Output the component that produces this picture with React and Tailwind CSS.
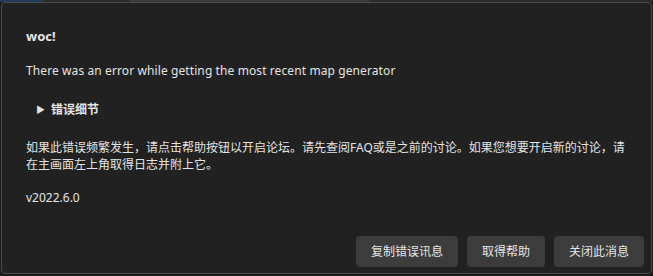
import React from 'react';

const font = { fontFamily: '"Noto Sans", "Noto Sans CJK SC", sans-serif' };

const Button = ({ children }) => (
  <button className="h-[31px] rounded-[4px] bg-[#3c3c3c] px-[15px] text-[12px] text-[#e6e6e6]">
    {children}
  </button>
);

export default function App() {
  return (
    <div className="flex h-[276px] w-[653px] flex-col bg-[#1b1b1b]" style={font}>
      {/* app behind the dialog */}
      <div className="flex h-[2px] shrink-0">
        <div className="w-[50px] bg-[#1f3a5c]" />
        <div className="w-[100px] bg-[#2a2a2a]" />
        <div className="w-[280px] bg-[#3a3a3a]" />
        <div className="w-[330px] bg-[#2b2b2b]" />
        <div className="flex-1 bg-[#1f4a55]" />
      </div>

      <div className="mx-[1px] flex h-[272px] flex-col rounded-[4px] border border-[#4a4a4a] bg-[#212121] pl-[24px] pr-[7px] text-[12px] text-[#e4e4e4]">
        <div className="mt-[24px] text-[13px] font-bold leading-[18px]">woc!</div>
        <div className="mt-[17px] tracking-[0.1px] leading-[18px]">There was an error while getting the most recent map generator</div>
        <div className="mt-[21px] flex items-center gap-[6px] pl-[10px] font-bold leading-[18px]">
          <span className="text-[9px]">▶</span>
          <span>错误细节</span>
        </div>
        <div className="mt-[20px] pr-[17px] leading-[17px]">
          如果此错误频繁发生，请点击帮助按钮以开启论坛。请先查阅FAQ或是之前的讨论。如果您想要开启新的讨论，请在主画面左上角取得日志并附上它。
        </div>
        <div className="mt-[16px] leading-[18px]">v2022.6.0</div>
        <div className="mt-auto mb-[6px] flex justify-end gap-[9px]">
          <Button>复制错误讯息</Button>
          <Button>取得帮助</Button>
          <Button>关闭此消息</Button>
        </div>
      </div>
    </div>
  );
}
